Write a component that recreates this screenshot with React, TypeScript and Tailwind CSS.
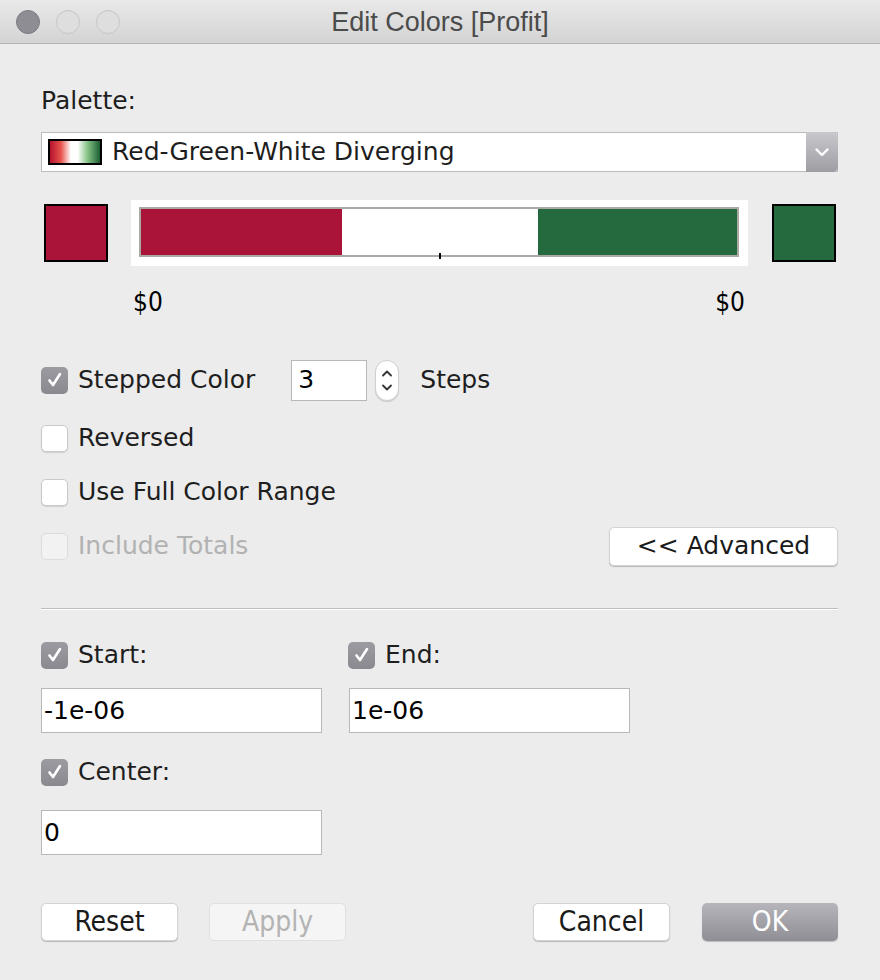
import React from 'react';

const Check = () => (
  <svg width="20" height="20" viewBox="0 0 20 20">
    <path d="M4.5 10.5 L8 15 L15 4" fill="none" stroke="#fff" strokeWidth="2.6" strokeLinecap="round" strokeLinejoin="round" />
  </svg>
);

const Box = ({ state }: { state: 'on' | 'off' | 'disabled' }) => {
  if (state === 'on')
    return (
      <div className="w-[27px] h-[27px] rounded-[5px] bg-[linear-gradient(#9c9ba1,#8a8990)] flex items-center justify-center shrink-0">
        <Check />
      </div>
    );
  if (state === 'disabled')
    return <div className="w-[27px] h-[27px] rounded-[5px] bg-[#f2f2f2] border border-[#dcdcdc] shrink-0" />;
  return <div className="w-[27px] h-[27px] rounded-[5px] bg-white border border-[#c9c9c9] shadow-[0_1px_1px_rgba(0,0,0,0.12)] shrink-0" />;
};

const Btn = ({ label, kind = 'normal', w }: { label: string; kind?: 'normal' | 'disabled' | 'default'; w: string }) => {
  const base = 'h-[38px] rounded-[5px] flex items-center justify-center text-[28px] [font-stretch:condensed] font-["DejaVu_Sans_Condensed","DejaVu_Sans",sans-serif] ' + w;
  if (kind === 'default')
    return <div className={base + ' bg-[linear-gradient(#b6b5bb,#8f8e94)] text-white shadow-[0_1px_1px_rgba(0,0,0,0.2)]'}>{label}</div>;
  if (kind === 'disabled')
    return <div className={base + ' bg-[#f5f5f5] border border-[#e0e0e0] text-[#b3b3b3]'}>{label}</div>;
  return <div className={base + ' bg-white border border-[#d3d3d3] text-[#1a1a1a] shadow-[0_1px_1px_rgba(0,0,0,0.22)]'}>{label}</div>;
};

const Field = ({ value }: { value: string }) => (
  <div className="w-[281px] h-[45px] bg-white border border-[#b8b8b8] flex items-center pl-[2px] text-[25px] text-black">{value}</div>
);

export default function App() {
  return (
    <div className="w-[880px] h-[980px] bg-[#ececec] font-['DejaVu_Sans',sans-serif] text-[#1e1e1e] flex flex-col">
      {/* title bar */}
      <div className="h-[44px] shrink-0 grid grid-cols-[1fr_auto_1fr] items-center bg-[linear-gradient(#e9e9e9,#d3d3d3)] border-b border-[#b3b3b3]">
        <div className="flex items-center gap-[16px] pl-[16px]">
          <div className="w-[24px] h-[24px] rounded-full bg-[#8e8d94] border border-[#7d7c83]" />
          <div className="w-[24px] h-[24px] rounded-full bg-[#dedede] border border-[#c6c6c6]" />
          <div className="w-[24px] h-[24px] rounded-full bg-[#dedede] border border-[#c6c6c6]" />
        </div>
        <div className="text-[27px] text-[#4b4b4b] font-['Liberation_Sans',sans-serif] pt-[2px]">Edit Colors [Profit]</div>
        <div />
      </div>

      <div className="pl-[41px] pr-[42px] flex flex-col">
        <div className="mt-[43px] h-[28px] flex items-center text-[25px]">Palette:</div>

        {/* palette dropdown */}
        <div className="mt-[17px] h-[40px] flex bg-white border border-[#bcbcbc]">
          <div className="flex-1 flex items-center pl-[6px] gap-[10px]">
            <div className="w-[54px] h-[26px] border-2 border-black bg-[linear-gradient(to_right,#b5122e,#e8544c_22%,#ffffff_42%,#ffffff_55%,#86c486_75%,#1b5e32)]" />
            <span className="text-[25px] text-[#1e1e1e]">Red-Green-White Diverging</span>
          </div>
          <div className="w-[32px] -my-px -mr-px rounded-r-[5px] bg-[linear-gradient(#c9c8cd,#9e9da3)] flex items-center justify-center">
            <svg width="16" height="12" viewBox="0 0 16 12">
              <path d="M2.5 3.5 L8 9 L13.5 3.5" fill="none" stroke="#fff" strokeWidth="2.4" strokeLinecap="round" strokeLinejoin="round" />
            </svg>
          </div>
        </div>

        {/* colour ramp */}
        <div className="mt-[28px] h-[66px] flex items-center pl-[3px]">
          <div className="w-[64px] h-[58px] border-2 border-black bg-[#ab1439]" />
          <div className="ml-[23px] w-[617px] h-[66px] bg-white pl-[8px] pr-[9px] pt-[7px] pb-[9px]">
            <div className="relative w-full h-full border-2 border-[#a9aaa3] flex">
              <div className="w-[201px] bg-[#ab1439]" />
              <div className="w-[196px] bg-white" />
              <div className="flex-1 bg-[#256a3f]" />
              <div className="absolute left-[298px] -bottom-[4px] w-[2px] h-[6px] bg-black" />
            </div>
          </div>
          <div className="ml-[24px] w-[64px] h-[58px] border-2 border-black bg-[#256a3f]" />
        </div>

        <div className="mt-[22px] h-[28px] flex items-center justify-between pl-[92px] pr-[93px] text-[26px] font-['DejaVu_Sans_Condensed','DejaVu_Sans',sans-serif] [font-stretch:condensed] text-black">
          <span>$0</span>
          <span>$0</span>
        </div>

        {/* options */}
        <div className="mt-[42px] h-[44px] flex items-center">
          <Box state="on" />
          <span className="ml-[10px] text-[25px]">Stepped Color</span>
          <div className="ml-[36px] w-[76px] h-[41px] bg-white border border-[#b8b8b8] flex items-center pl-[6px] text-[25px] text-black">3</div>
          <div className="ml-[8px] w-[24px] h-[41px] rounded-full bg-white border border-[#cfcfcf] shadow-[0_1px_1px_rgba(0,0,0,0.15)] flex flex-col items-center justify-center gap-[7px]">
            <svg width="12" height="7" viewBox="0 0 12 7"><path d="M2 5.5 L6 1.5 L10 5.5" fill="none" stroke="#333" strokeWidth="1.8" strokeLinecap="round" strokeLinejoin="round" /></svg>
            <svg width="12" height="7" viewBox="0 0 12 7"><path d="M2 1.5 L6 5.5 L10 1.5" fill="none" stroke="#333" strokeWidth="1.8" strokeLinecap="round" strokeLinejoin="round" /></svg>
          </div>
          <span className="ml-[21px] text-[25px]">Steps</span>
        </div>

        <div className="mt-[18px] h-[36px] flex items-center">
          <Box state="off" />
          <span className="ml-[10px] text-[25px]">Reversed</span>
        </div>

        <div className="mt-[18px] h-[36px] flex items-center">
          <Box state="off" />
          <span className="ml-[10px] text-[25px]">Use Full Color Range</span>
        </div>

        <div className="mt-[16px] h-[40px] flex items-center justify-between">
          <div className="flex items-center">
            <Box state="disabled" />
            <span className="ml-[10px] text-[25px] text-[#b2b2b2]">Include Totals</span>
          </div>
          <div className="w-[229px] h-[39px] rounded-[5px] bg-white border border-[#d3d3d3] shadow-[0_1px_1px_rgba(0,0,0,0.22)] flex items-center justify-center text-[25px] text-[#1a1a1a]">
            &lt;&lt; Advanced
          </div>
        </div>

        <div className="mt-[42px] h-[1px] bg-[#bdbdbd]" />
        <div className="h-[1px] bg-white" />

        {/* range */}
        <div className="mt-[31px] h-[28px] flex items-center">
          <div className="w-[307px] flex items-center">
            <Box state="on" />
            <span className="ml-[10px] text-[25px]">Start:</span>
          </div>
          <Box state="on" />
          <span className="ml-[10px] text-[25px]">End:</span>
        </div>

        <div className="mt-[19px] flex gap-[27px]">
          <Field value="-1e-06" />
          <Field value="1e-06" />
        </div>

        <div className="mt-[25px] h-[28px] flex items-center">
          <Box state="on" />
          <span className="ml-[10px] text-[25px]">Center:</span>
        </div>

        <div className="mt-[24px] flex">
          <Field value="0" />
        </div>

        {/* buttons */}
        <div className="mt-[48px] flex items-center">
          <Btn label="Reset" w="w-[137px]" />
          <div className="ml-[31px]">
            <Btn label="Apply" kind="disabled" w="w-[137px]" />
          </div>
          <div className="ml-auto flex gap-[32px]">
            <Btn label="Cancel" w="w-[137px]" />
            <Btn label="OK" kind="default" w="w-[136px]" />
          </div>
        </div>
      </div>
    </div>
  );
}
